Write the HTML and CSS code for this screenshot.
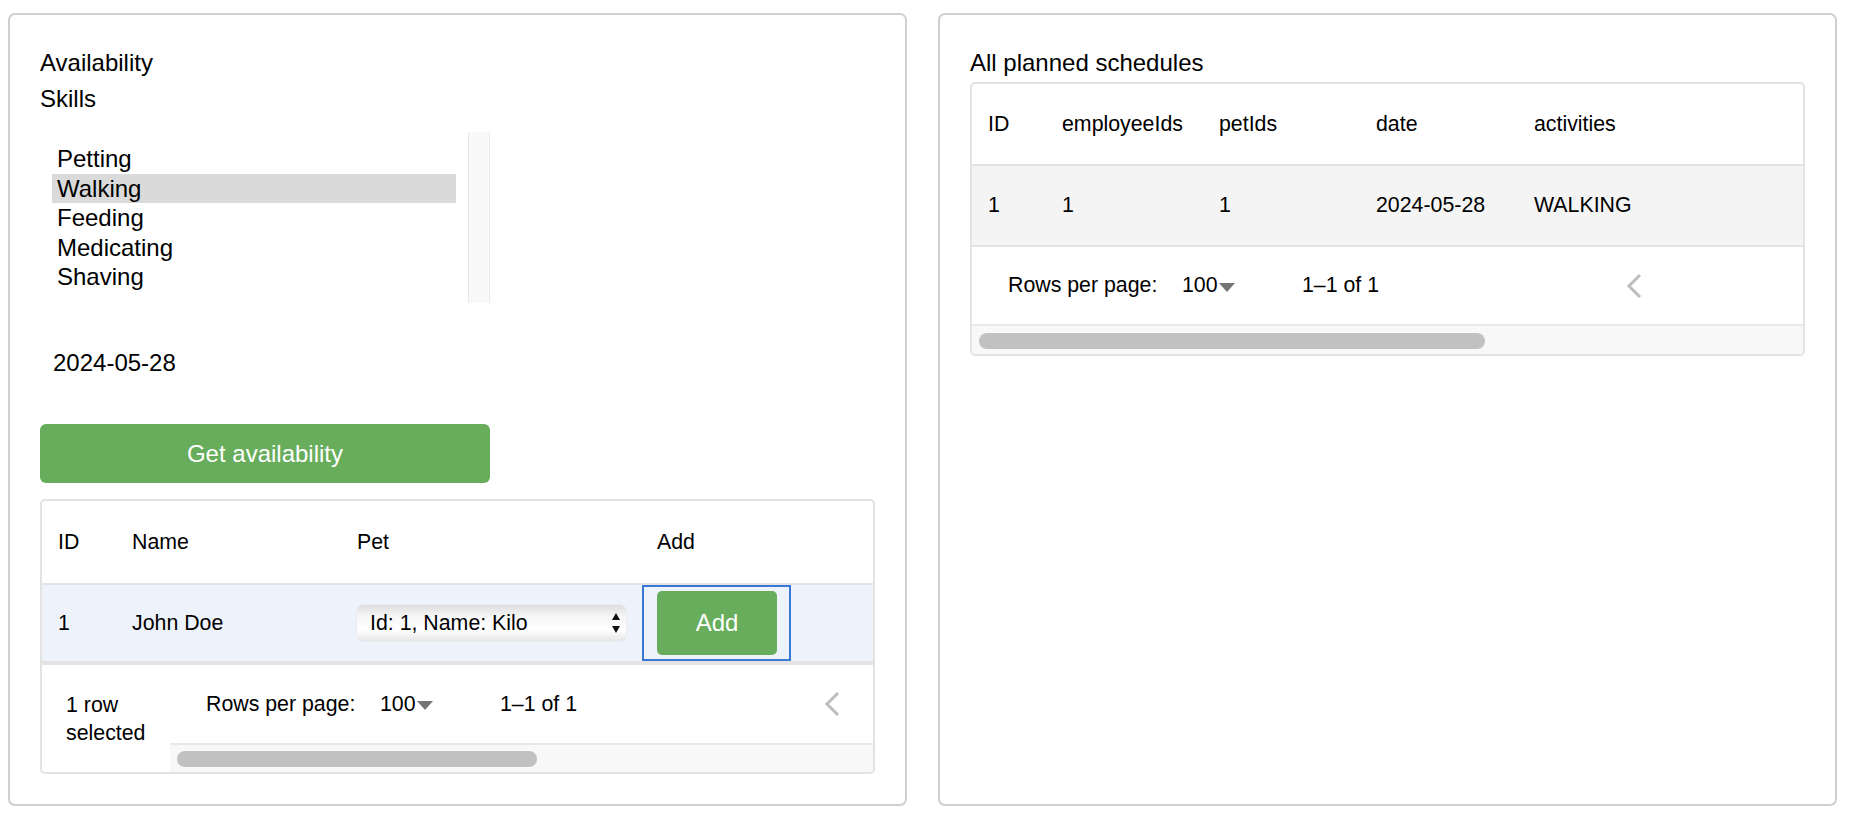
FILE: index.html
```html
<!DOCTYPE html>
<html lang="en">
<head>
<meta charset="utf-8">
<title>Schedules</title>
<link rel="stylesheet" href="styles.css">
</head>
<body>
<div class="page">
  <section class="panel panel-left">
    <div class="label label-first">Availability</div>
    <div class="label">Skills</div>
    <div class="listbox">
      <div class="options">
        <div class="opt">Petting</div>
        <div class="opt opt-selected">Walking</div>
        <div class="opt">Feeding</div>
        <div class="opt">Medicating</div>
        <div class="opt">Shaving</div>
      </div>
      <div class="vscroll"></div>
    </div>
    <div class="date">2024-05-28</div>
    <button class="btn-primary">Get availability</button>

    <div class="grid grid-left">
      <div class="ghead cols-emp">
        <div class="cell">ID</div>
        <div class="cell">Name</div>
        <div class="cell">Pet</div>
        <div class="cell">Add</div>
        <div class="cell"></div>
      </div>
      <div class="grow grow-selected cols-emp">
        <div class="cell">1</div>
        <div class="cell">John Doe</div>
        <div class="cell">
          <div class="pet-select">
            <span>Id: 1, Name: Kilo</span>
            <svg class="updown" width="8" height="20" viewBox="0 0 8 20"><path d="M4 0 L8 7 L0 7 Z M0 13 L8 13 L4 20 Z" fill="#111"/></svg>
          </div>
        </div>
        <div class="cell cell-focus"><button class="btn-add">Add</button></div>
        <div class="cell"></div>
      </div>
      <div class="gfoot">
        <div class="selected-count">1 row<br>selected</div>
        <div class="foot-main">
          <div class="pager pager-left">
            <span class="rpp">Rows per page:</span>
            <span class="rpp-select">100<svg class="caret" width="16" height="9" viewBox="0 0 16 9"><path d="M0 0 L16 0 L8 9 Z" fill="#757575"/></svg></span>
            <span class="range">1–1 of 1</span>
            <svg class="chev" width="16" height="26" viewBox="0 0 16 26"><path d="M14 2 L3 13 L14 24" fill="none" stroke="#bdbdbd" stroke-width="3"/></svg>
          </div>
          <div class="hscroll"><div class="thumb" style="width:360px"></div></div>
        </div>
      </div>
    </div>
  </section>

  <section class="panel panel-right">
    <div class="label label-first">All planned schedules</div>
    <div class="grid grid-right">
      <div class="ghead ghead-r cols-sched">
        <div class="cell">ID</div>
        <div class="cell">employeeIds</div>
        <div class="cell">petIds</div>
        <div class="cell">date</div>
        <div class="cell">activities</div>
      </div>
      <div class="grow grow-r cols-sched">
        <div class="cell">1</div>
        <div class="cell">1</div>
        <div class="cell">1</div>
        <div class="cell">2024-05-28</div>
        <div class="cell">WALKING</div>
      </div>
      <div class="pager pager-right">
        <span class="rpp">Rows per page:</span>
        <span class="rpp-select">100<svg class="caret" width="16" height="9" viewBox="0 0 16 9"><path d="M0 0 L16 0 L8 9 Z" fill="#757575"/></svg></span>
        <span class="range">1–1 of 1</span>
        <svg class="chev" width="16" height="26" viewBox="0 0 16 26"><path d="M14 2 L3 13 L14 24" fill="none" stroke="#bdbdbd" stroke-width="3"/></svg>
      </div>
      <div class="hscroll hscroll-r"><div class="thumb" style="width:506px"></div></div>
    </div>
  </section>
</div>
</body>
</html>
```

FILE: styles.css
```css
* { box-sizing: border-box; }

html, body {
  margin: 0;
  padding: 0;
  background: #ffffff;
}

body {
  font-family: "Liberation Sans", Arial, Helvetica, sans-serif;
  color: #000;
  font-size: 24px;
}

.page {
  display: grid;
  grid-template-columns: 899px 899px;
  column-gap: 31px;
  padding: 13px 0 0 8px;
}

.panel {
  height: 793px;
  border: 2px solid #cfcfcf;
  border-radius: 7px;
  padding: 34px 30px 0 30px;
}

.label {
  line-height: 28px;
  height: 28px;
}

.label + .label { margin-top: 8px; }

/* listbox */
.listbox {
  margin-top: 19px;
  width: 450px;
  height: 171px;
  display: flex;
}

.options {
  width: 428px;
  padding: 12px;
}

.opt {
  height: 29.5px;
  line-height: 29.5px;
  padding-left: 5px;
}

.opt-selected { background: #dadada; }

.vscroll {
  width: 22px;
  height: 100%;
  background: #f9f9f9;
  border-left: 1px solid #e9e9e9;
  border-right: 1px solid #ececec;
}

.date {
  margin-top: 46px;
  line-height: 28px;
  height: 28px;
  padding-left: 13px;
}

.btn-primary {
  display: block;
  margin-top: 47px;
  width: 450px;
  height: 59px;
  border: none;
  border-radius: 6px;
  background: #67ad5c;
  color: #fff;
  font-family: inherit;
  font-size: 24px;
  padding: 0;
}

/* data grid */
.grid {
  border: 2px solid #e3e3e3;
  border-radius: 5px;
  font-size: 21.33px;
  overflow: hidden;
  width: 835px;
}

.grid-left { margin-top: 16px; }

.grid-right { margin-top: 5px; }

.cols-emp {
  display: grid;
  grid-template-columns: 74px 225px 300px 150px 1fr;
}

.cols-sched {
  display: grid;
  grid-template-columns: 74px 157px 157px 158px 1fr;
}

.cell {
  display: flex;
  align-items: center;
  padding-left: 16px;
  white-space: nowrap;
}

.ghead {
  height: 84px;
  border-bottom: 2px solid #e3e3e3;
}

.grow {
  height: 80px;
  border-bottom: 4px solid #e3e3e3;
}

.grow-selected { background: #eef2fa; }

.ghead-r { height: 82px; }

.grow-r {
  height: 81px;
  border-bottom: 2px solid #e3e3e3;
  background: #f4f4f4;
}

.cell-focus {
  outline: 2px solid #3a78d6;
  outline-offset: -2px;
  margin-left: 1px;
  padding-left: 15px;
}

.pet-select {
  width: 269px;
  height: 36px;
  border-radius: 7px;
  background: linear-gradient(#dedede, #f8f8f8 35%, #ffffff 70%, #e6e6e6);
  box-shadow: 0 0 1px #b5b5b5;
  display: flex;
  align-items: center;
  justify-content: space-between;
  padding: 0 6px 0 13px;
}

.updown { display: block; }

.btn-add {
  width: 120px;
  height: 64px;
  border: none;
  border-radius: 5px;
  background: #67ad5c;
  color: #fff;
  font-family: inherit;
  font-size: 24px;
  padding: 0;
}

.gfoot {
  display: flex;
  height: 107px;
}

.selected-count {
  width: 128px;
  padding-left: 24px;
  line-height: 28px;
  align-self: center;
}

.foot-main {
  flex: 1;
  display: flex;
  flex-direction: column;
}

.pager {
  display: flex;
  align-items: center;
  padding-left: 36px;
}

.pager-left { height: 78px; }

.pager-right { height: 77px; }

.rpp { width: 174px; }

.rpp-select {
  width: 120px;
  display: flex;
  align-items: center;
}

.caret { display: block; margin-left: 1px; margin-top: 3px; }

.range { width: 324px; }

.chev { display: block; }

.hscroll {
  flex: 1;
  background: #f8f8f8;
  border-top: 2px solid #e8e8e8;
  padding: 6px 0 0 7px;
}

.hscroll-r {
  height: 30px;
  padding: 7px 0 0 7px;
}

.thumb {
  height: 16px;
  border-radius: 8px;
  background: #c1c1c1;
}
```
